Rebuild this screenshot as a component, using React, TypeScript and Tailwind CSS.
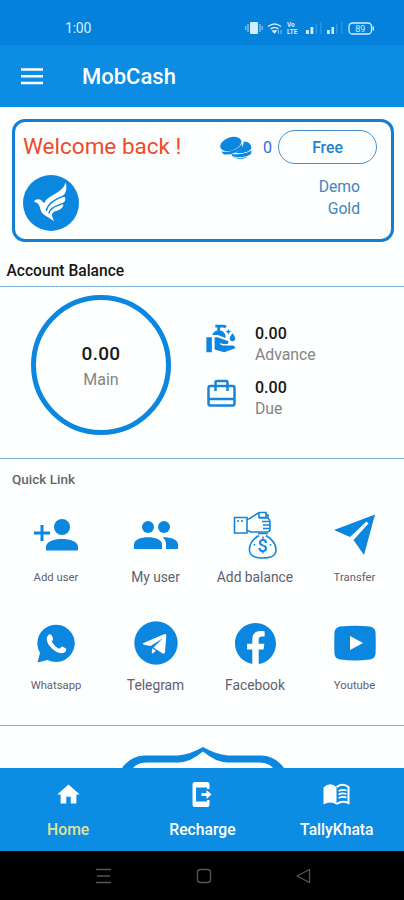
import React from "react";
import { MdCleanHands, MdHome } from "react-icons/md";
import { BsFacebook } from "react-icons/bs";

function StatusBar() {
  return (
    <div className="flex h-[45px] items-center bg-[#0482db] pt-[11px] pr-[28px] pl-[65px] text-[#d2edff]">
      <span className="text-[14px] leading-4 tracking-[-0.2px]">1:00</span>
      <svg className="ml-auto" width="131" height="18" viewBox="0 0 131 18" fill="currentColor">
        <rect x="5" y="3" width="8" height="12" rx="1" />
        <path d="M3 5v8M15 5v8M.8 7v4M17.2 7v4" stroke="currentColor" strokeWidth="1" opacity=".8" />
        <path d="M23 7.500q6.500-5 13 0M25.500 10q4-3 8 0" fill="none" stroke="currentColor" strokeWidth="1.400" />
        <path d="M27 11.500h5L29.500 14.500zM33.500 11v4M36 11v4" stroke="currentColor" strokeWidth=".6" />
        <text x="42" y="8" fontSize="6.500" fontWeight="700" fontFamily="Roboto, sans-serif">Vo</text>
        <text x="42" y="15" fontSize="6.500" fontWeight="700" fontFamily="Roboto, sans-serif">LTE</text>
        <path d="M61 11h2.800v4H61zM65.500 8h2.800v7h-2.800zM82 11h2.800v4H82zM86.500 8h2.500v7h-2.500z" />
        <path d="M70.500 5h1.500v10h-1.500zM75 3h1.500v12H75zM91 5h1.500v10H91zM96 3h1.500v12H96z" opacity=".18" />
        <rect x="104" y="4" width="22.500" height="11" rx="3.500" fill="none" stroke="currentColor" strokeWidth="1.300" />
        <path d="M127.500 7.500h1.500v4h-1.500z" />
        <text x="115.200" y="12.900" textAnchor="middle" fontSize="9" fontFamily="Roboto, sans-serif">89</text>
      </svg>
    </div>
  );
}

function Header() {
  return (
    <header className="flex h-[62px] items-center bg-[#0c8ce3] pl-[21px] text-white">
      <svg width="22" height="17" viewBox="0 0 22 17" stroke="currentColor" strokeWidth="2.500">
        <path d="M0 1.500h22M0 8.200h22M0 14.900h22" />
      </svg>
      <h1 className="ml-[39px] pt-px text-[22px] leading-7 font-medium">MobCash</h1>
    </header>
  );
}

function Bird() {
  return (
    <svg width="56" height="56" viewBox="0 0 56 56">
      <circle cx="28" cy="28" r="28" fill="#0c87df" />
      <path
        d="M11 26.500C12.500 24 16 23.500 18.500 25.500C20 27 20.500 28 21.500 28C24 20 40 18.500 42.500 7.500C44.500 12 43.500 18.500 39 21.500C43.500 20.500 43.500 26 39 28.800C41.500 28.500 40.500 34 34.500 35.500C31 36.300 29.500 37.500 28.800 40C29.500 42.500 30.500 44.500 31 46.500C27 42.500 21 41 18.500 37C16 32.500 18 29 11 26.500Z"
        fill="white"
      />
      <path d="M23.500 36C24 29 31 24.500 42 20.500M26 38.500C27 32.500 33 31 42 27.800" fill="none" stroke="#0c87df" strokeWidth="1.400" />
    </svg>
  );
}

function Coins() {
  return (
    <svg width="32" height="23" viewBox="0 0 32 23" fill="#0c87df">
      <ellipse cx="10.800" cy="8" rx="11" ry="6.700" transform="rotate(-20 10.800 8)" />
      <path d="M1.500 15.500C9 17 18 13.800 22.300 7.500L21.800 12.500C16 17.800 8 19.500 3.500 18.200Z" />
      <path d="M23.700 5.500C29 5.500 32 9 31.200 12.500C29 16.800 20 17.800 15.500 16.800C20 14.500 23.500 11 23.700 5.500Z" />
      <path d="M11.500 18.200C19 18.800 27 17.800 31.500 14.300L31 18C26 21.500 17 22 12 20Z" />
      <path d="M13 21C18 22.500 25 22 28.500 20.500C24 23.500 17 23.500 13 21Z" />
    </svg>
  );
}

function AccountCard() {
  return (
    <section className="mr-[10.5px] ml-[11.5px] mt-3 flex h-[123px] justify-between rounded-[13px] border-[3px] border-[#127fd7] pr-[13.5px] pl-[8.5px]">
      <div className="pt-[11px]">
        <p className="text-[22.5px] leading-[27px] whitespace-nowrap text-[#ef4a2b]">Welcome back !</p>
        <div className="mt-[15px]"><Bird /></div>
      </div>
      <div className="pt-[8px]">
        <div className="flex items-center text-[#2180d0]">
          <Coins />
          <span className="ml-[11px] w-[10px] pt-px text-[16px] text-[#2e6edc]">0</span>
          <button className="ml-[5px] h-[34px] w-[99px] rounded-full border border-[#488fcb] pt-[2px] text-[15.7px] font-medium">Free</button>
        </div>
        <div className="mt-[12px] pr-[17px] text-right text-[15.7px] leading-[21.5px] text-[#4384bd]">
          <p>Demo</p>
          <p>Gold</p>
        </div>
      </div>
    </section>
  );
}

function BriefcaseIcon() {
  return (
    <svg className="-mt-[10px] ml-[2px]" width="29" height="28" viewBox="0 0 29 28" fill="none" stroke="#1a84d8" strokeWidth="2.500">
      <rect x="1.500" y="7" width="26" height="19.500" rx="2" />
      <path d="M8.500 12V3.500q0-1.500 1.500-1.500h9q1.500 0 1.500 1.500V12M1.500 20h26" />
    </svg>
  );
}

function Amount({ icon, label }: { icon: React.ReactNode; label: string }) {
  return (
    <div className="flex h-[54px] items-center">
      <div className="flex w-[50px]">{icon}</div>
      <div>
        <p className="text-[16px] leading-[21px] font-medium text-[#171717]">0.00</p>
        <p className="text-[15.8px] leading-[22px] text-[#858585]">{label}</p>
      </div>
    </div>
  );
}

function Balance() {
  return (
    <section className="flex h-[173px] border-y border-[#7fb2dc] pl-[31px]">
      <div className="mt-[8px] flex h-[140px] w-[140px] flex-col items-center rounded-full border-[5px] border-[#0c87df] pt-[41px]">
        <p className="text-[19px] leading-[26px] font-medium tracking-[0.3px] text-[#1a1a1a]">0.00</p>
        <p className="text-[16px] leading-[25px] text-[#858585]">Main</p>
      </div>
      <div className="ml-[34px] pt-[30px]">
        <Amount icon={<MdCleanHands className="-mt-3" size={33} color="#0c87df" />} label="Advance" />
        <Amount icon={<BriefcaseIcon />} label="Due" />
      </div>
    </section>
  );
}

function AddUserIcon() {
  return (
    <svg width="44" height="32" viewBox="0 0 44 32" fill="#0c87df">
      <path d="M6.500 6h3v6.500H16v3H9.500V22h-3v-6.500H0v-3h6.500z" />
      <circle cx="28" cy="8" r="8" />
      <path d="M12 31.500V28C12 22.500 20 20 28 20s16 2.500 16 8v3.500z" />
    </svg>
  );
}

function UsersIcon() {
  return (
    <svg width="44" height="29" viewBox="0 0 44 29" fill="#0c87df">
      <circle cx="14" cy="6" r="6" />
      <circle cx="30" cy="6" r="6" />
      <path d="M0 28V23.500C0 18.500 7 16.300 14 16.300s14 2.200 14 7.200V28z" />
      <path d="M28.500 16.300C36 16 44 18.500 44 23.500V28H32V23.500C32 20.500 31 18.300 28.500 16.300Z" />
    </svg>
  );
}

function MoneyHandIcon() {
  return (
    <svg width="44" height="48" viewBox="0 0 44 48" fill="none" stroke="#1684d8" strokeWidth="1.600">
      <path d="M1.500 6.500h12.500v15.500H1.500zM4 10h2m2 0h2" />
      <path d="M14 8.500C18 8 21 4 24.500 2.500C26 1 27 1.500 28.500 1.500H33v5h-7v-4M33 4h2v3M26 7h9q2 2 2 4v7q0 3-3 3H18l-4-1.500" />
      <path d="M29 10.500h8M30 14h7M30 17.500h7" />
      <path d="M25 22.500h10M26 24.500C20 28 16 33 16.500 39.500C17 46 23 47 30 47s13-2 13-8c0-6-5-11.500-10-14.500" />
      <path d="M21.500 33v1.500M37.500 33v1.500" />
      <text x="29.500" y="41" textAnchor="middle" fontSize="18" fontWeight="500" fill="#1684d8" stroke="none" fontFamily="Roboto, sans-serif">$</text>
    </svg>
  );
}

function TransferIcon() {
  return (
    <svg width="42" height="42" viewBox="0 0 42 42" fill="#0c87df">
      <path d="M41 .5L0 16l16 7L32.500 7.500l2 2L19.500 26l10.500 15z" />
    </svg>
  );
}

function WhatsappIcon() {
  return (
    <svg width="39" height="39" viewBox="0 0 39 39">
      <path d="M.5 38.500L3 29A18.700 18.700 0 1 1 10.500 36z" fill="#0c87df" />
      <path d="M11 11.500C12.500 9.500 14 10 15 12L16 14.500C16.500 16 14.500 17 15 18C17 21.500 19.500 23.500 22.500 24.700C23.500 24.500 24 22.500 25.300 22.500L29 24.500C30 26 28.500 28.500 26 29C22.500 29.800 17 27 13.500 23C10 19 8.500 15 11 11.500Z" fill="white" />
    </svg>
  );
}

function TelegramIcon() {
  return (
    <svg width="44" height="44" viewBox="0 0 44 44">
      <circle cx="22" cy="22" r="21.700" fill="#0c87df" />
      <path d="M9 22.300L30 13.300Q32.500 12.500 32.300 15L31 31Q30.500 33.500 28.300 32.300L19.500 26.500L28.500 17.500L16.500 25L10 23.700Q8 23 9 22.300Z" fill="white" />
      <path d="M18.300 27.300L22 29.800L19 32.300Q17.800 32.800 17.700 31Z" fill="white" />
    </svg>
  );
}

function YoutubeIcon() {
  return (
    <svg width="42" height="36" viewBox="0 0 42 36">
      <path d="M6 1.500Q21 0 36 1.500Q41 2.500 41.500 7Q42 18 41.500 29Q41 33.500 36 34.500Q21 36.500 6 34.500Q1 33.500.5 29Q0 18 .5 7Q1 2.500 6 1.500Z" fill="#0c87df" />
      <path d="M16 11l13 7-13 7z" fill="white" />
    </svg>
  );
}

const links = [
  { label: "Add user", icon: <AddUserIcon />, small: true },
  { label: "My user", icon: <UsersIcon />, small: false },
  { label: "Add balance", icon: <MoneyHandIcon />, small: false },
  { label: "Transfer", icon: <TransferIcon />, small: true },
  { label: "Whatsapp", icon: <WhatsappIcon />, small: true },
  { label: "Telegram", icon: <TelegramIcon />, small: false },
  { label: "Facebook", icon: <BsFacebook size={41} color="#0c87df" />, small: false },
  { label: "Youtube", icon: <YoutubeIcon />, small: true },
];

function QuickLinks() {
  return (
    <section className="h-[267px] border-b border-[#7fb2dc] pt-[12px]">
      <h2 className="pl-[12px] text-[13.5px] leading-4 font-medium text-[#666]">Quick Link</h2>
      <div className="mt-[19px] grid grid-cols-[100px_99px_100px_99px] gap-y-[1px] pl-[6px]">
        {links.map((l) => (
          <div key={l.label} className="flex h-[107px] flex-col items-center">
            <div className="flex h-[58px] items-center justify-center">{l.icon}</div>
            <span className={l.small ? "mt-[4px] text-[11.3px] leading-5 whitespace-nowrap text-[#626071]" : "mt-[3px] text-[13.8px] leading-5 whitespace-nowrap text-[#626071]"}>{l.label}</span>
          </div>
        ))}
      </div>
    </section>
  );
}

function RechargeIcon() {
  return (
    <svg width="20" height="27" viewBox="0 0 20 27" fill="currentColor">
      <path d="M3 1h12q2.500 0 2.500 2.500V8H15V6.500H4v14h11V19h2.500v4.500Q17.500 26 15 26H3Q.5 26 .5 23.500v-20Q.5 1 3 1z" />
      <path d="M9.500 12h5V9l5 4.500-5 4.500v-3h-5z" />
    </svg>
  );
}

function LedgerIcon() {
  return (
    <svg width="27" height="27" viewBox="0 0 27 27" fill="currentColor">
      <path d="M.5 5.500Q7-.5 13.500 5v17.500Q7 18.500.5 22.500z" transform="translate(0 1)" />
      <path d="M13.500 6Q20 1.500 25.500 6v16q-6-3-12 1" fill="none" stroke="currentColor" strokeWidth="2" />
      <path d="M15.500 10q4-2 8-.5M15.500 13.500q4-2 8-.5M15.500 17q4-2 8-.5" fill="none" stroke="currentColor" strokeWidth="1.600" />
    </svg>
  );
}

function NavItem({ icon, label, active }: { icon: React.ReactNode; label: string; active?: boolean }) {
  return (
    <div className="flex flex-col items-center pt-[13px]">
      {icon}
      <span className={active ? "mt-[9.5px] leading-6 text-[#e0e29b]" : "mt-[9.5px] leading-6"}>{label}</span>
    </div>
  );
}

function BottomNav() {
  return (
    <nav className="grid h-[83px] grid-cols-3 bg-[#0c8ce3] pl-[1px] text-[15.7px] font-medium text-white">
      <NavItem icon={<MdHome size={27} />} label="Home" active />
      <NavItem icon={<RechargeIcon />} label="Recharge" />
      <NavItem icon={<LedgerIcon />} label="TallyKhata" />
    </nav>
  );
}

function SystemNav() {
  return (
    <div className="h-[49px] bg-black">
      <svg width="404" height="49" viewBox="0 0 404 49" fill="none" stroke="#555" strokeWidth="1.300">
        <path d="M96 18.500h15M97 25h13M96 31.500h15" />
        <rect x="197.500" y="18.500" width="13" height="13" rx="3" />
        <path d="M297 25l12.500-6.500v13z" strokeLinejoin="round" />
      </svg>
    </div>
  );
}

export default function App() {
  return (
    <div className="flex h-[900px] w-[404px] flex-col overflow-hidden bg-[#fdfefe] font-[Roboto,sans-serif]">
      <StatusBar />
      <Header />
      <AccountCard />
      <h2 className="mt-[19px] h-[25px] pl-[6.5px] text-[15.6px] leading-5 font-medium text-[#161616]">Account Balance</h2>
      <Balance />
      <QuickLinks />
      <div className="flex h-[42px] items-end justify-center pl-[2px]">
        <svg width="162" height="21" viewBox="0 0 162 21" fill="#0c87df">
          <path d="M0 21Q9 8.500 23 8.500H56Q68 7.500 81 0Q94 7.500 106 8.500H139Q153 8.500 162 21H151Q146 15.500 138 15.500H106Q94 15.500 81 4.500Q68 15.500 56 15.500H24Q16 15.500 11 21Z" />
        </svg>
      </div>
      <BottomNav />
      <SystemNav />
    </div>
  );
}
